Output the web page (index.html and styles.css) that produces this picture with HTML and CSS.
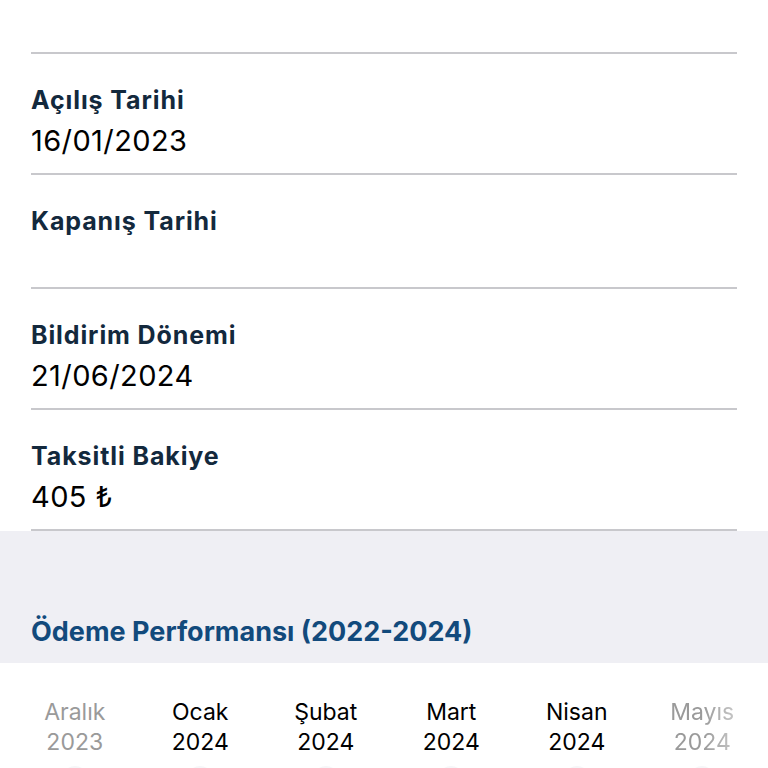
FILE: index.html
```html
<!DOCTYPE html>
<html lang="tr">
<head>
    <meta charset="UTF-8">
    <meta name="viewport" content="width=device-width, initial-scale=1.0">
    <title>Kart Detayı</title>
    <link rel="stylesheet" href="styles.css">
</head>
<body>
    <div class="details">
        <div class="row row-cut"></div>

        <div class="row">
            <div class="label">Açılış Tarihi</div>
            <div class="value">16/01/2023</div>
        </div>

        <div class="row">
            <div class="label">Kapanış Tarihi</div>
            <div class="value empty"></div>
        </div>

        <div class="row">
            <div class="label">Bildirim Dönemi</div>
            <div class="value">21/06/2024</div>
        </div>

        <div class="row">
            <div class="label">Taksitli Bakiye</div>
            <div class="value">405 ₺</div>
        </div>
    </div>

    <div class="section-head">
        <h2>Ödeme Performansı (2022-2024)</h2>
    </div>

    <div class="months">
        <div class="month faded">
            <span>Aralık</span>
            <span>2023</span>
            <i class="dot"></i>
        </div>
        <div class="month">
            <span>Ocak</span>
            <span>2024</span>
            <i class="dot"></i>
        </div>
        <div class="month">
            <span>Şubat</span>
            <span>2024</span>
            <i class="dot"></i>
        </div>
        <div class="month">
            <span>Mart</span>
            <span>2024</span>
            <i class="dot"></i>
        </div>
        <div class="month">
            <span>Nisan</span>
            <span>2024</span>
            <i class="dot"></i>
        </div>
        <div class="month faded last">
            <span>Mayıs</span>
            <span>2024</span>
            <i class="dot"></i>
        </div>
    </div>
</body>
</html>
```

FILE: styles.css
```css
* {
    margin: 0;
    padding: 0;
    box-sizing: border-box;
    font-family: 'Inter', 'Roboto', sans-serif;
}

body {
    background-color: #ffffff;
    width: 768px;
    height: 768px;
    overflow: hidden;
}

.details {
    padding: 0 31px;
    background-color: #ffffff;
}

.row {
    padding: 31px 0 14px;
    border-bottom: 2px solid #c8c8cc;
}

.row-cut {
    height: 54px;
    padding: 0;
}

.label {
    color: #13293d;
    font-size: 25px;
    font-weight: 700;
    line-height: 30px;
    letter-spacing: 0.9px;
}

.value {
    margin-top: 8px;
    color: #000000;
    font-size: 29px;
    line-height: 36px;
    letter-spacing: 0.4px;
}

.value.empty {
    height: 29px;
}

.section-head {
    background-color: #efeff4;
    padding: 86px 31px 16px;
}

.section-head h2 {
    color: #124a7c;
    font-size: 27px;
    font-weight: 700;
    line-height: 30px;
    letter-spacing: 0;
}

.months {
    display: grid;
    grid-template-columns: repeat(6, 125.5px);
    padding: 34px 0 0 12px;
    background-color: #ffffff;
}

.month {
    display: flex;
    flex-direction: column;
    align-items: center;
    color: #000000;
    font-size: 23px;
    line-height: 30px;
}

.month.faded {
    color: #9a9a9a;
}

.month.last {
    -webkit-mask-image: linear-gradient(to right, #000 50%, rgba(0, 0, 0, 0.15));
    mask-image: linear-gradient(to right, #000 50%, rgba(0, 0, 0, 0.15));
}

.dot {
    display: block;
    width: 26px;
    height: 26px;
    margin-top: 9px;
    border-radius: 50%;
    background-color: #f6f6f8;
}
```
